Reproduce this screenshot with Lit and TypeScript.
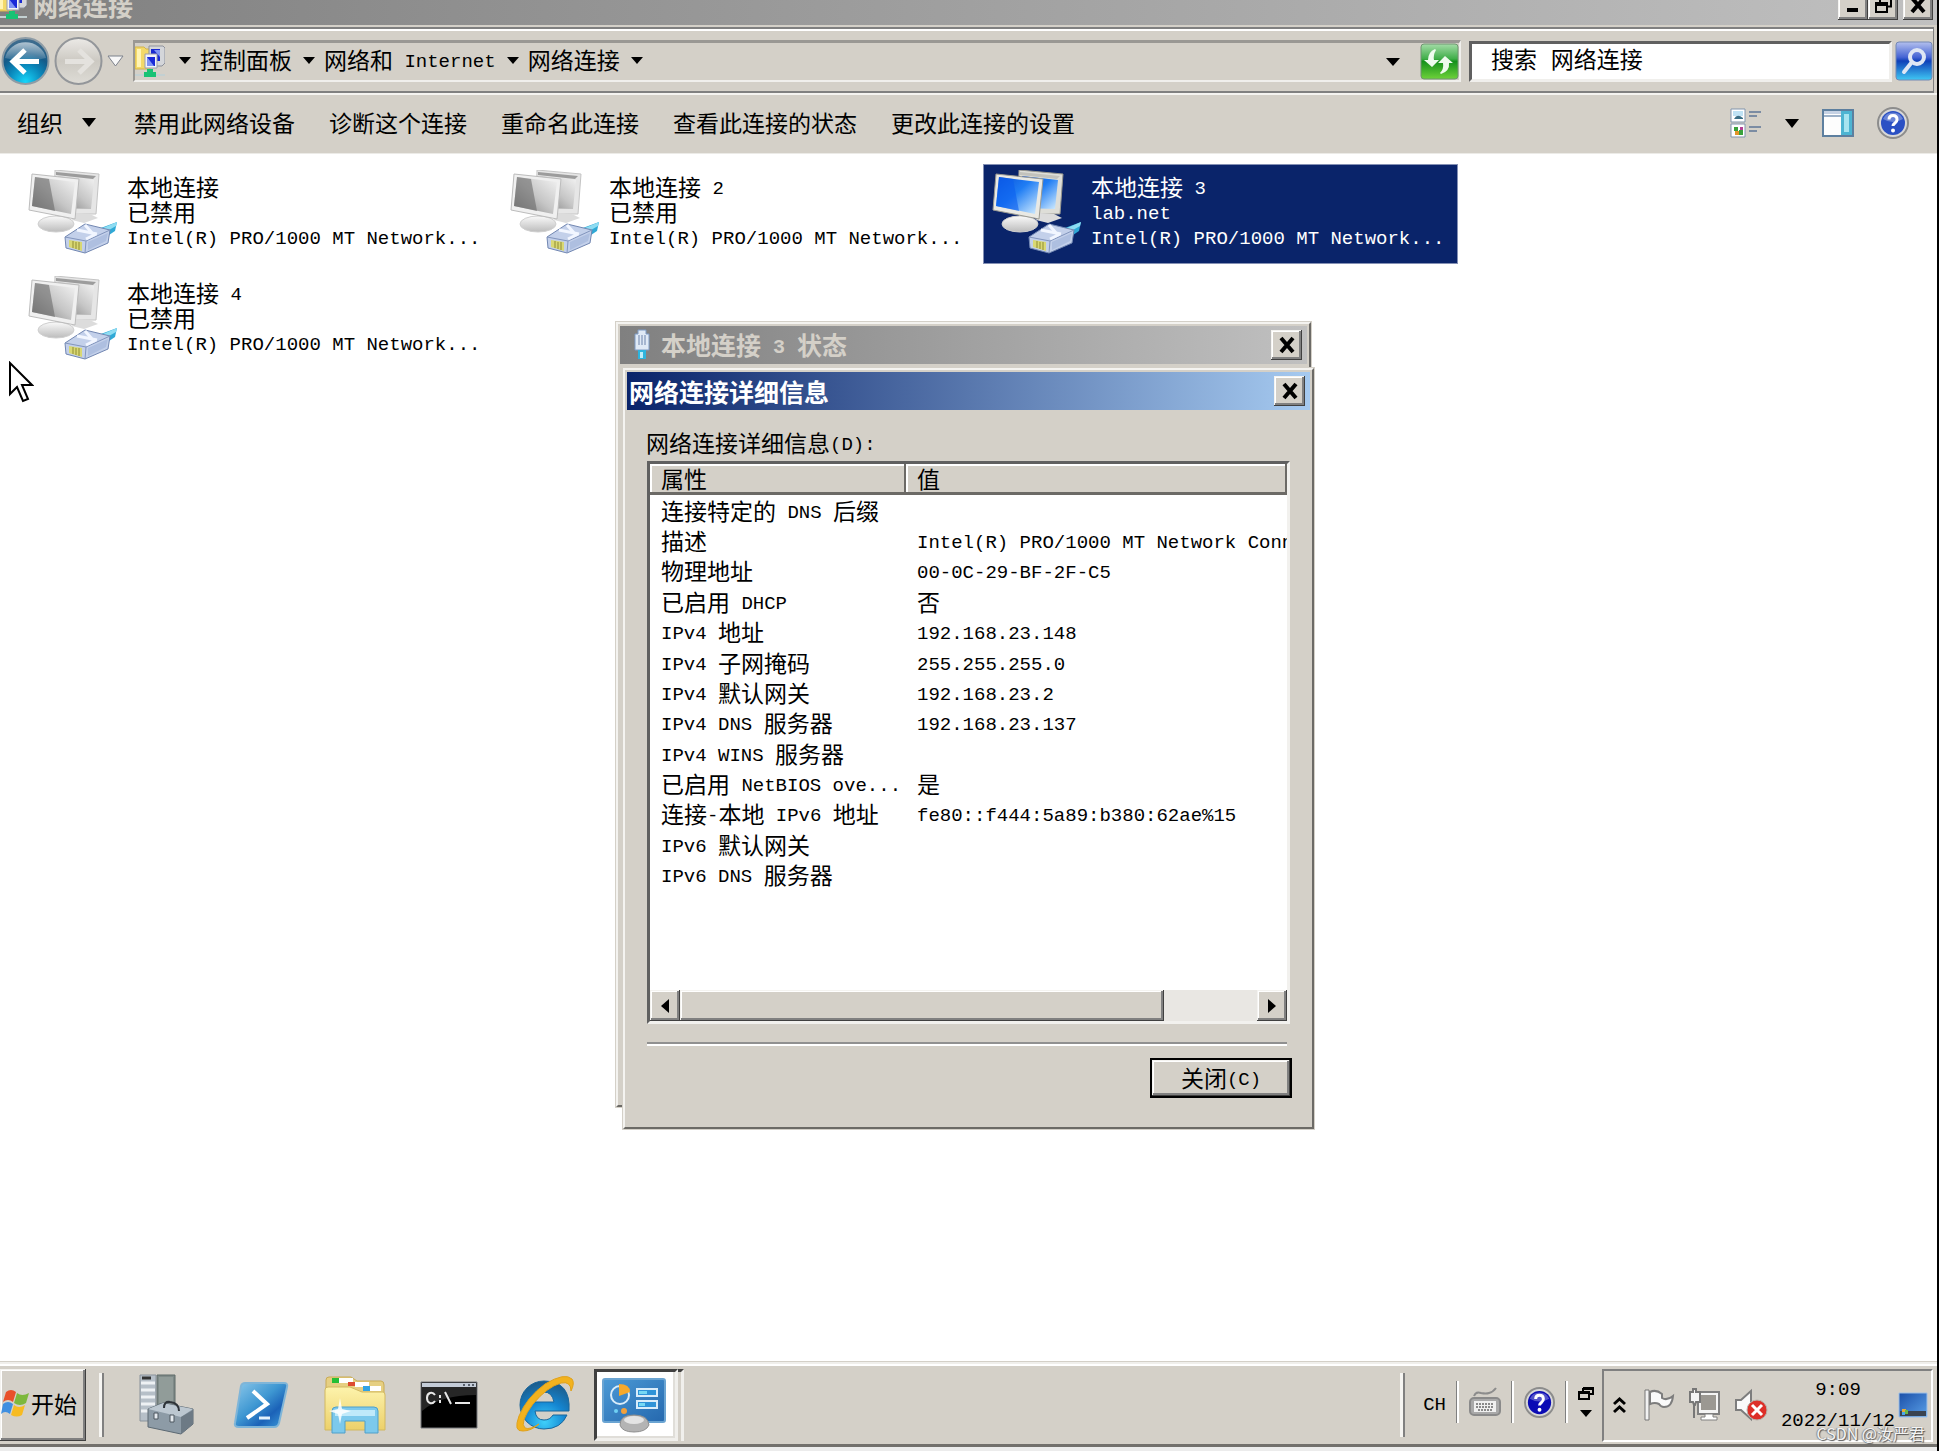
import { LitElement, html, css, svg, nothing } from "lit";
import { customElement, property } from "lit/decorators.js";
import { classMap } from "lit/directives/class-map.js";

const CJK = /([\u2e80-\uffef]+)/;

/* Latin runs are set in a half-width monospace beside the full-width Chinese glyphs. */
const mix = (text: string) =>
  text
    .split(CJK)
    .filter((run) => run !== "")
    .map((run) => (CJK.test(run) ? html`<span>${run}</span>` : html`<span class="latin">${run}</span>`));

const base = css`
  * { box-sizing: border-box; }
  :host {
    font-family: "Noto Sans CJK SC", sans-serif;
    font-size: 23px;
    line-height: 25px;
    color: #000;
  }
  button, input { font: inherit; color: inherit; margin: 0; border: 0; border-radius: 0; padding: 0; background: none; }
  svg { display: block; flex: none; }
  .latin { font-family: "Liberation Mono", monospace; font-size: 19px; line-height: 1; vertical-align: 2px; white-space: pre; }
  .raised {
    background: #d4d0c8;
    box-shadow: inset -1px -1px #404040, inset 1px 1px #f4f3f0, inset -3px -3px #808080, inset 2px 2px #fff;
  }
`;

const defs = svg`
  <defs>
    <linearGradient id="screenOn" x1="0" y1="0" x2="1" y2="1">
      <stop offset="0" stop-color="#0a4fd8"/><stop offset=".45" stop-color="#1f7df4"/><stop offset="1" stop-color="#d8f0ff"/>
    </linearGradient>
    <linearGradient id="screenOff" x1="0" y1="1" x2="1" y2="0">
      <stop offset="0" stop-color="#7c7c7c"/><stop offset=".5" stop-color="#c6c6c6"/><stop offset="1" stop-color="#f4f4f4"/>
    </linearGradient>
    <linearGradient id="stand" x1="0" y1="0" x2="0" y2="1">
      <stop offset="0" stop-color="#fafafa"/><stop offset="1" stop-color="#bcbcbc"/>
    </linearGradient>
  </defs>`;

const adapterIcon = (on: boolean) => html`<svg width="90" height="86" viewBox="0 0 90 86" aria-hidden="true">
  ${defs}
  <path d="M27 0 71 4 68 44 26 44z" fill=${on ? "#deded8" : "#e6e6e6"} stroke=${on ? "#96968e" : "#c4c4c4"}/>
  <path d="M28 2 68 6 65 9 28 5z" fill=${on ? "#c2c2bc" : "#9c9c9c"}/>
  <path d="M30 6 66 10 63 39 30 38z" fill=${on ? "url(#screenOn)" : "url(#screenOff)"}/>
  <path d="M48 43l14 1 8 4-14 5-12-3z" fill="#dcdcdc"/>
  <path d="M27 43h14v11H27z" fill="#c8c8c8"/>
  <ellipse cx="28" cy="54" rx="18" ry="8" fill="url(#stand)" stroke="#cfcfcf"/>
  <path d="M4 4 51 9 47 49 1 40z" fill=${on ? "#e9e9e4" : "#f0f0f0"} stroke=${on ? "#9a9a92" : "#bcbcbc"}/>
  <path d="M7 7 47 12 43 44 4 36z" fill=${on ? "url(#screenOn)" : "url(#screenOff)"}/>
  <path d="M7 7 21 9 27 41 4 36z" fill=${on ? "#0b5fee" : "#6a6a6a"} opacity=".6"/>
  <path d="M62 62 89 52 87 61 72 71z" fill="#2fa9d6"/>
  <path d="M70 60 89 52 88 56 74 64z" fill="#8edcf2"/>
  <path d="M37 67 57 54 82 60 80 73 57 83 38 78z" fill="#c3d0ea" stroke="#7287b2"/>
  <path d="M37 67 58 71 82 60M58 71 57 83" fill="none" stroke="#8295bd"/>
  <path d="M60 72 80 63 78 71 60 80z" fill="#aebfe0"/>
  <path d="M49 60 69 64M57 55 66 65 58 69" fill="none" stroke="#f2f6ff" stroke-width="3"/>
  <path d="M41 70 54 72V81L41 77z" fill="#d9d873"/>
  <path d="M45 71v7M48 72v7M51 72v8" stroke="#8f8c35"/>
</svg>`;

const networkIcon = html`<svg width="30" height="34" viewBox="0 0 30 34" aria-hidden="true">
  <path d="M0 2h9l2 2h4v20H0z" fill="#f3d968" stroke="#d3b44a"/>
  <path d="M2 4h4v18H2z" fill="#fff4b4"/>
  <path d="M14 1h14l2 2v15l-3 3H14z" fill="#d4d6da" stroke="#8e929c"/>
  <path d="M16 4h9v12h-9z" fill="#1a2ad0"/>
  <path d="M10 9h12v14H10z" fill="#f2f3f8" stroke="#9a9eac"/>
  <path d="M12 12h8v9h-8z" fill="#1a2ad8"/>
  <path d="M12 12l7 9h-7zM19 5l6 7V5z" fill="#7f94f4"/>
  <path d="M0 29h30v2H0z" fill="#c3d0d2"/>
  <path d="M12 24h6v3h3v5H9v-5h3z" fill="#17c274"/>
</svg>`;

const caret = (w = 12, h = 7) => html`<svg width=${w} height=${h} viewBox="0 0 12 7" preserveAspectRatio="none" aria-hidden="true"><path d="M0 0h12L6 7z" fill="#000"/></svg>`;

const closeGlyph = html`<svg width="18" height="18" viewBox="0 0 18 18" aria-hidden="true"><path d="M3 2 15 16M15 2 3 16" stroke="#000" stroke-width="4"/></svg>`;

const helpIcon = (size: number, dark: string) => html`<svg width=${size} height=${size} viewBox="0 0 32 32" aria-hidden="true">
  <circle cx="16" cy="16" r="15" fill="#d8d8d8" stroke="#8c8c8c" stroke-width="2"/>
  <circle cx="16" cy="16" r="12" fill=${dark}/>
  <path d="M6 12a11 11 0 0 1 20 0q-10 6-20 0z" fill="#fff" opacity=".3"/>
  <path d="M12 12.500q0-4 4-4t4 4q0 2-2 3.500t-2 3" fill="none" stroke="#fff" stroke-width="3"/>
  <circle cx="16" cy="23.500" r="2" fill="#fff"/>
</svg>`;

@customElement("title-bar")
class TitleBar extends LitElement {
  @property() caption = "";
  @property({ type: Boolean }) active = false;
  @property({ type: Boolean }) icon = false;

  static styles = [
    base,
    css`
      :host { display: block; }
      .bar {
        display: flex; align-items: center; gap: 10px; height: 38px; padding: 0 5px 0 2px;
        background: linear-gradient(90deg, #808080, #c0c0c0); color: #d4d0c8;
        font-size: 25px; font-weight: 700;
      }
      .bar.active { background: linear-gradient(90deg, #0a246a, #a6caf0); color: #fff; }
      .bar.icon { padding-left: 13px; }
      h2 { flex: 1; margin: 0; font: inherit; }
      .latin { font-size: 20px; }
      .close { display: grid; place-items: center; width: 31px; height: 30px; }
    `,
  ];

  render() {
    return html`<div class=${classMap({ bar: true, active: this.active, icon: this.icon })}>
      ${this.icon
        ? html`<svg width="18" height="32" viewBox="0 0 18 32" aria-hidden="true">
            <path d="M5 1h8v4h3v16H2V5h3z" fill="#dfe9f6" stroke="#7f9bc4"/>
            <path d="M6 6v10M9 6v10M12 6v10" stroke="#6c83ab"/>
            <path d="M5 21h8v9H5z" fill="#2db4dd"/><path d="M7 23h3v6H7z" fill="#bdeefa"/>
          </svg>`
        : nothing}
      <h2>${mix(this.caption)}</h2>
      <button class="close raised" aria-label="关闭">${closeGlyph}</button>
    </div>`;
  }
}

@customElement("details-dialog")
class DetailsDialog extends LitElement {
  static styles = [
    base,
    css`
      :host { display: block; }
      .label { margin: 17px 20px 4px 19px; line-height: 30px; }
      .list { margin: 0 20px; border: 3px solid; border-color: #606060 #f2f1ee #f2f1ee #606060; background: #fff; }
      .rows { height: 526px; overflow: hidden; }
      table { width: 100%; height: 426px; table-layout: fixed; border-collapse: separate; border-spacing: 0; line-height: 28px; }
      .prop { width: 256px; }
      thead tr { height: 31px; }
      th {
        height: 31px; padding: 0 0 0 11px; font-weight: 400; text-align: left; vertical-align: top; background: #d4d0c8;
        box-shadow: inset -2px -3px #6c6a66, inset 2px 2px #fff;
      }
      td { padding: 0 0 1px 11px; white-space: nowrap; }
      .scroll { display: flex; height: 31px; background: #e9e7e3; }
      .scroll button { display: grid; place-items: center; width: 30px; }
      .thumb { flex: 0 1 76%; margin-right: auto; }
      hr { margin: 18px 23px 12px 20px; height: 4px; border: 0; border-top: 2px solid #909090; border-bottom: 2px solid #fff; }
      footer { display: flex; justify-content: flex-end; padding: 0 18px 27px; }
      .ok { width: 142px; height: 40px; border: 2px solid #000; padding-bottom: 2px; }
    `,
  ];

  private rows: [string, string][] = [
    ["连接特定的 DNS 后缀", ""],
    ["描述", "Intel(R) PRO/1000 MT Network Connection"],
    ["物理地址", "00-0C-29-BF-2F-C5"],
    ["已启用 DHCP", "否"],
    ["IPv4 地址", "192.168.23.148"],
    ["IPv4 子网掩码", "255.255.255.0"],
    ["IPv4 默认网关", "192.168.23.2"],
    ["IPv4 DNS 服务器", "192.168.23.137"],
    ["IPv4 WINS 服务器", ""],
    ["已启用 NetBIOS ove...", "是"],
    ["连接-本地 IPv6 地址", "fe80::f444:5a89:b380:62ae%15"],
    ["IPv6 默认网关", ""],
    ["IPv6 DNS 服务器", ""],
  ];

  render() {
    return html`
      <title-bar caption="网络连接详细信息" active></title-bar>
      <div class="label" id="details-label">${mix("网络连接详细信息(D):")}</div>
      <div class="list">
        <div class="rows">
          <table aria-labelledby="details-label">
            <thead><tr><th class="prop" scope="col">属性</th><th scope="col">值</th></tr></thead>
            <tbody>${this.rows.map(([name, value]) => html`<tr><td>${mix(name)}</td><td>${mix(value)}</td></tr>`)}</tbody>
          </table>
        </div>
        <div class="scroll">
          <button class="raised" aria-label="向左"><svg width="8" height="14" viewBox="0 0 8 14"><path d="M8 0v14L0 7z"/></svg></button>
          <div class="thumb raised"></div>
          <button class="raised" aria-label="向右"><svg width="8" height="14" viewBox="0 0 8 14"><path d="M0 0v14L8 7z"/></svg></button>
        </div>
      </div>
      <hr />
      <footer><button class="ok raised">${mix("关闭(C)")}</button></footer>
    `;
  }
}

@customElement("explorer-chrome")
class ExplorerChrome extends LitElement {
  static styles = [
    base,
    css`
      :host { display: block; background: #d4d0c8; }
      .title {
        display: flex; align-items: flex-start; justify-content: space-between; height: 25px; overflow: hidden;
        padding-right: 4px; background: linear-gradient(90deg, #808080, #c0c0c0);
      }
      .name { display: flex; gap: 6px; margin-top: -13px; color: #d4d0c8; font-size: 25px; font-weight: 700; line-height: 36px; }
      .name svg { margin-left: -3px; }
      .controls { display: flex; }
      .controls button { display: grid; place-items: center; width: 30px; height: 30px; margin-top: -10px; }
      .controls .x { margin-left: 5px; }
      .nav {
        display: flex; align-items: center; height: 66px; margin-top: 2px; padding: 2px 0 0 1px;
        border: 2px solid #808080; border-left: 0; border-right-width: 1px; box-shadow: inset 0 2px #fff; margin-right: 3px;
      }
      .arrows { display: flex; align-items: center; gap: 4px; }
      .arrows svg { display: block; }
      .recent { margin: 0 9px 0 0; }
      .address {
        display: flex; flex: 1; align-items: center; height: 42px; margin-right: 8px;
        border: 2px solid; border-color: #9a9894 #f0efec #f0efec #9a9894; border-top-width: 3px;
      }
      .crumbs { display: flex; flex: 1; align-items: center; gap: 9px; padding: 0 0 2px 14px; }
      .crumbs button { padding: 0 2px 3px 0; white-space: nowrap; }
      .history { margin-right: 20px; }
      .search { display: flex; align-items: center; gap: 3px; width: 464px; }
      .search input {
        flex: 1; min-width: 0; height: 41px; padding: 2px 0 0 19px; background: #fff; outline: 0;
        font-family: "Liberation Mono", "Noto Sans CJK SC", monospace;
        border: 3px solid; border-color: #606060 #f0efec #f0efec #606060;
      }
      .search input::placeholder { color: #000; opacity: 1; }
      .tools {
        display: flex; align-items: center; justify-content: space-between; height: 60px; padding: 0 28px 2px 17px;
        border-top: 2px solid #f4f3f0;
      }
      .group { display: flex; align-items: center; gap: 34px; padding-bottom: 2px; }
      .group button { display: flex; align-items: center; gap: 19px; line-height: 30px; white-space: nowrap; }
      .group .organize { padding-right: 4px; }
      .views { display: flex; align-items: center; gap: 23px; }
    `,
  ];

  render() {
    return html`
      <header class="title">
        <div class="name">${networkIcon}<span>网络连接</span></div>
        <div class="controls">
          <button class="raised" aria-label="最小化"><svg width="18" height="18" viewBox="0 0 18 18"><path d="M3 12h11v4H3z"/></svg></button>
          <button class="raised" aria-label="还原"><svg width="20" height="18" viewBox="0 0 20 18"><path d="M7 1.500h11v9h-4M7 2v4M7 3h11M3 7h11v9H3zM3 9h11" fill="none" stroke="#000" stroke-width="2"/></svg></button>
          <button class="raised x" aria-label="关闭">${closeGlyph}</button>
        </div>
      </header>
      <div class="nav">
        <div class="arrows">
          <button aria-label="后退">
            <svg width="49" height="50" viewBox="0 0 49 50">
              <defs>
                <radialGradient id="back" cx=".5" cy=".95" r=".95"><stop offset="0" stop-color="#16d6fa"/><stop offset=".4" stop-color="#0a84b8"/><stop offset=".65" stop-color="#155a88"/><stop offset="1" stop-color="#47708f"/></radialGradient>
                <linearGradient id="shine" x1="0" y1="0" x2="0" y2="1"><stop offset="0" stop-color="#fff" stop-opacity=".6"/><stop offset="1" stop-color="#fff" stop-opacity=".1"/></linearGradient>
              </defs>
              <circle cx="24.500" cy="25" r="23" fill="url(#back)" stroke="#8e9ca6" stroke-width="2"/>
              <path d="M4 22a21 20 0 0 1 41 0q-20 6-41 0z" fill="url(#shine)"/>
              <path d="M24 14 12 25.500 24 37M13 25.500H38" fill="none" stroke="#fff" stroke-width="5"/>
            </svg>
          </button>
          <button aria-label="前进">
            <svg width="49" height="50" viewBox="0 0 49 50">
              <defs><linearGradient id="fwd" x1="0" y1="0" x2="0" y2="1"><stop offset="0" stop-color="#eceae7"/><stop offset=".5" stop-color="#ccc9c2"/><stop offset="1" stop-color="#dedcd6"/></linearGradient></defs>
              <circle cx="24.500" cy="25" r="23" fill="url(#fwd)" stroke="#93969a" stroke-width="2"/>
              <path d="M25 14 37 25.500 25 37M36 25.500H11" fill="none" stroke="#e4e2de" stroke-width="5"/>
            </svg>
          </button>
          <button class="recent" aria-label="最近的页面"><svg width="17" height="12" viewBox="0 0 17 12"><path d="M1 1h15L8.500 11z" fill="#f8f8f8" stroke="#7d828c"/></svg></button>
        </div>
        <div class="address">
          ${networkIcon}
          <nav class="crumbs">
            ${caret()}<button>控制面板</button>${caret()}<button>${mix("网络和 Internet")}</button>${caret()}<button>网络连接</button>${caret()}
          </nav>
          <button class="history" aria-label="历史">${caret(14, 8)}</button>
          <button aria-label="刷新">
            <svg width="39" height="37" viewBox="0 0 39 37">
              <defs><linearGradient id="go" x1="0" y1="0" x2="0" y2="1"><stop offset="0" stop-color="#a4dca8"/><stop offset=".42" stop-color="#3fae48"/><stop offset=".5" stop-color="#15911c"/><stop offset="1" stop-color="#6ed23a"/></linearGradient></defs>
              <rect x="1" y="1" width="37" height="35" rx="3" fill="url(#go)" stroke="#6f9470"/>
              <path d="M15 6q-7 3-7 11H4l8 7 7-7h-5q-1-5 2-10z" fill="#eefbee"/>
              <path d="M21 31q9-3 8-11h4l-8-7-7 7h5q1 6-3 10z" fill="#eefbee"/>
            </svg>
          </button>
        </div>
        <form class="search" @submit=${(e: Event) => e.preventDefault()}>
          <input type="text" aria-label="搜索" placeholder="搜索 网络连接" />
          <button aria-label="开始搜索">
            <svg width="38" height="40" viewBox="0 0 38 40">
              <defs><linearGradient id="find" x1="0" y1="0" x2="0" y2="1"><stop offset="0" stop-color="#b4c0ee"/><stop offset=".4" stop-color="#4564d4"/><stop offset=".5" stop-color="#0f40b8"/><stop offset="1" stop-color="#3fc8f4"/></linearGradient></defs>
              <rect x="1" y="1" width="36" height="38" rx="3" fill="url(#find)" stroke="#7388b4"/>
              <circle cx="22" cy="16" r="7" fill="none" stroke="#dfe6f4" stroke-width="4"/>
              <path d="M17 21 9 31" stroke="#dfe6f4" stroke-width="4" stroke-linecap="round"/>
            </svg>
          </button>
        </form>
      </div>
      <div class="tools">
        <div class="group">
          <button class="organize">组织 ${caret(14, 9)}</button>
          ${["禁用此网络设备", "诊断这个连接", "重命名此连接", "查看此连接的状态", "更改此连接的设置"].map((t) => html`<button>${t}</button>`)}
        </div>
        <div class="views">
          <button aria-label="更改视图">
            <svg width="32" height="32" viewBox="0 0 32 32">
              <path d="M1 2h14v13H1zM1 17h14v13H1z" fill="#fff" stroke="#8195ad"/>
              <path d="M3 4h10v5H3z" fill="#bfe2f4"/><path d="M4 12q3-6 9-1v1z" fill="#3b6f86"/>
              <path d="M4 20h4v4H4zM9 23h4v5H9z" fill="#3aa23c"/><path d="M5 24h4v4H5z" fill="#e2952a"/><path d="M10 20h3v3h-3z" fill="#b33f95"/>
              <path d="M19 5h12M19 9h8M19 20h12M19 24h8" stroke="#7b8ca3" stroke-width="2"/>
            </svg>
          </button>
          <button aria-label="视图选项">${caret(14, 9)}</button>
          <button aria-label="预览窗格">
            <svg width="32" height="28" viewBox="0 0 32 28">
              <path d="M1 1h30v26H1z" fill="#fdfdfd" stroke="#5d7f9f" stroke-width="2"/>
              <path d="M2 2h17v3H2z" fill="#c6d2e4"/><path d="M2 6h17v2H2z" fill="#9db1c8"/>
              <path d="M19 2h11v24H19z" fill="#4db4d2"/><path d="M22 5h5v18h-5z" fill="#a7e4f0"/>
            </svg>
          </button>
          <button aria-label="帮助">${helpIcon(32, "#2a50c4")}</button>
        </div>
      </div>
    `;
  }
}

@customElement("task-bar")
class TaskBar extends LitElement {
  static styles = [
    base,
    css`
      :host { display: block; }
      .bar {
        display: flex; align-items: center; height: 86px; padding: 4px 4px 0 0; background: #d4d0c8;
        border-top: 1px solid #d4d0c8; border-bottom: 3px solid #72706c; box-shadow: inset 0 2px #f0efec, inset 0 4px #fff;
      }
      .start { display: flex; align-items: center; gap: 1px; height: 72px; width: 86px; padding: 0 0 4px 1px; white-space: nowrap; }
      .grip { width: 5px; height: 64px; background: #f6f5f2; border-right: 2px solid #808080; }
      .start + .grip { margin: 0 16px 0 13px; }
      .apps { display: flex; flex: 1; }
      .apps button { display: grid; place-items: center; width: 94px; height: 72px; }
      .apps .open {
        width: 84px; margin-left: 4px; background: #fff; padding-right: 4px;
        border: 3px solid; border-color: #404040 #f0efec #f0efec #404040; box-shadow: inset -2px -2px #e0ded9;
      }
      .edge { width: 6px; height: 72px; border-right: 3px solid #f0efec; border-top: 3px solid #404040; }
      .lang { display: flex; align-items: center; padding: 0 8px 6px 18px; gap: 10px; }
      .sep { width: 3px; height: 42px; background: #fff; border-left: 1px solid #808080; }
      .mini { display: grid; justify-items: center; gap: 10px; }
      .tray {
        display: flex; align-items: center; gap: 13px; height: 73px; padding: 0 3px 0 9px;
        border: 2px solid; border-color: #808080 #fff #fff #808080;
      }
      .more { padding-right: 4px; }
      .clock { display: grid; gap: 6px; text-align: center; margin-right: -10px; padding-bottom: 4px; }
      .foot { height: 4px; background: #ececec; }
    `,
  ];

  render() {
    return html`
      <footer class="bar">
        <button class="start raised">
          <svg width="29" height="28" viewBox="0 0 29 28" aria-hidden="true">
            <path d="M5 3q5-4 10 0l-3 10q-5-4-10 0z" fill="#e8502a"/>
            <path d="M16 4q5 4 12 0l-3 10q-6 4-12 0z" fill="#7db83c"/>
            <path d="M2 15q5-4 10 0L9 25q-5-4-9 0z" fill="#3f8fe0"/>
            <path d="M13 16q5 4 11 0l-3 10q-5 3-11 0z" fill="#f7bb22"/>
          </svg>
          <span>开始</span>
        </button>
        <div class="grip"></div>
        <div class="apps">
          <button aria-label="服务器管理器">
            <svg width="56" height="62" viewBox="0 0 56 62">
              <path d="M18 1h18v46H18z" fill="#7f8a88" stroke="#5f6a68"/><path d="M20 3h14v26H20z" fill="#919c99"/>
              <path d="M1 1h16v46H1z" fill="#b6bfc8" stroke="#8a939b"/><path d="M3 4h9" stroke="#333" stroke-width="3"/>
              <path d="M2 9h14M2 16h14M2 23h14M2 30h14M2 37h14" stroke="#eef1f4" stroke-width="3"/>
              <path d="M9 35 24 29 54 35v15L42 60 9 53z" fill="#8d9ba6" stroke="#5c6973"/>
              <path d="M9 35 24 29 54 35 42 43z" fill="#bcc7d0"/><path d="M42 43 54 36v14L42 60z" fill="#6d7a85"/>
              <path d="M25 34q0-7 6-6 9 1 9 9" fill="none" stroke="#2e3338" stroke-width="2"/>
              <path d="M15 39h4v6h-4zM31 41h4v7h-4z" fill="#e4e9ee" stroke="#4d565e"/>
            </svg>
          </button>
          <button aria-label="PowerShell">
            <svg width="56" height="48" viewBox="0 0 56 48">
              <defs><linearGradient id="ps" x1="0" y1="0" x2="1" y2="1"><stop offset="0" stop-color="#8cc8ea"/><stop offset=".45" stop-color="#3e97d2"/><stop offset=".7" stop-color="#1b62b8"/><stop offset="1" stop-color="#3f9fdc"/></linearGradient></defs>
              <path d="M12 2h39q4 0 3 4l-8 36q-1 4-5 4H6q-5 0-4-4L8 5q1-3 4-3z" fill="url(#ps)" stroke="#7fb5d8" stroke-width="2"/>
              <path d="M20 10 34 23 14 37" fill="none" stroke="#fff" stroke-width="4"/><path d="M26 37h11" stroke="#e4f2fc" stroke-width="3"/>
            </svg>
          </button>
          <button aria-label="资源管理器">
            <svg width="64" height="58" viewBox="0 0 64 58">
              <defs><linearGradient id="fold" x1="0" y1="0" x2="0" y2="1"><stop offset="0" stop-color="#fdf3ac"/><stop offset="1" stop-color="#ecd06a"/></linearGradient></defs>
              <path d="M3 4q0-3 3-3h22l6 4h24q3 0 3 4v42H3z" fill="#e6cf82" stroke="#c9ab55"/>
              <path d="M16 2h14v5H16zM32 6h14v5H32zM46 10h12v5H46z" fill="#fff"/>
              <path d="M9 2h7v5H9z" fill="#25bf35"/><path d="M25 6h7v4h-7z" fill="#dd4b30"/>
              <path d="M2 14q0-3 3-3h22l12 5h21q2 0 2 3v35H2z" fill="url(#fold)" stroke="#d2b860"/>
              <path d="M40 10h7v5h-7z" fill="#30a2e4"/>
              <path d="M9 57V35q0-4 4-4h38q4 0 4 4v22H42V45H22v12z" fill="#7cc9ec" stroke="#4f9fca"/>
              <path d="M12 34h40v6H12z" fill="#bfe9fa"/>
              <path d="M17 22 19 33 28 35 19 38 17 48 15 38 6 35 15 33z" fill="#fff" opacity=".85"/>
            </svg>
          </button>
          <button aria-label="命令提示符">
            <svg width="58" height="48" viewBox="0 0 58 48">
              <path d="M1 1h56v46H1z" fill="#000" stroke="#77797c"/><path d="M2 2h54v4H2z" fill="#c4ccd8"/>
              <path d="M44 3v2M49 3v2M53 3v2" stroke="#59606b" stroke-width="2"/>
              <path d="M2 6h54v8Q20 14 2 30z" fill="#fff" opacity=".15"/>
              <path d="M15 14q-2-3-5-2-3 1-3 5t3 5q3 1 5-2M20 14v3M20 19v3M25 11l6 12M35 22h15" fill="none" stroke="#e8e8e8" stroke-width="2"/>
            </svg>
          </button>
          <button aria-label="Internet Explorer">
            <svg width="64" height="60" viewBox="0 0 64 60">
              <defs><radialGradient id="ie" cx=".5" cy=".85" r=".85"><stop offset="0" stop-color="#3fd0fa"/><stop offset=".5" stop-color="#1486d2"/><stop offset="1" stop-color="#1c5a88"/></radialGradient></defs>
              <path fill-rule="evenodd" d="M33 6A24 24 0 0 0 33 54Q50 54 56 40H42Q39 45 33 45 25 45 24 36H58Q60 6 33 6zM24 27Q25 17 33 17T43 27z" fill="url(#ie)" stroke="#19669c"/>
              <path d="M12 56Q2 57 8 41 16 22 34 9 54-3 61 4 64 8 60 16 60 6 50 8 36 12 22 29 8 48 14 53q5 2 14-4-8 7-16 7z" fill="#f2b21e" stroke="#e0a11a"/>
            </svg>
          </button>
          <button class="open" aria-label="控制面板">
            <svg width="64" height="56" viewBox="0 0 64 56">
              <defs><linearGradient id="cp" x1="0" y1="0" x2="1" y2="1"><stop offset="0" stop-color="#4c9ad6"/><stop offset="1" stop-color="#2568ae"/></linearGradient></defs>
              <rect x="1" y="2" width="62" height="43" rx="2" fill="url(#cp)" stroke="#6aa4d2" stroke-width="2"/>
              <circle cx="18" cy="18" r="9" fill="none" stroke="#d9ecfa" stroke-width="2"/>
              <path d="M17 19V7q11 0 11 8z" fill="#f6a92c"/>
              <path d="M35 12h20v7H35zM35 24h20v7H35z" fill="#2f93d8" stroke="#d9ecfa" stroke-width="2"/><path d="M37 14h8v3h-8zM37 26h6v3h-6z" fill="#76d8f4"/>
              <circle cx="14" cy="34" r="2" fill="#6fd0f4"/><circle cx="22" cy="34" r="3" fill="#f0a03c"/>
              <path d="M18 48Q18 38 32 38T47 48Q44 55 32 55T18 48z" fill="#b4b4b4" stroke="#8f8f8f"/><ellipse cx="32" cy="43" rx="10" ry="4" fill="#e4e4e4"/>
            </svg>
          </button>
          <div class="edge"></div>
        </div>
        <div class="grip"></div>
        <div class="lang">
          <button>${mix("CH")}</button>
          <div class="sep"></div>
          <button aria-label="键盘"><svg width="32" height="30" viewBox="0 0 32 30">
            <path d="M5 9q2-5 7-3 5 1 8 0 4-1 7-5" fill="none" stroke="#8c8c8c" stroke-width="2"/>
            <rect x="1" y="11" width="30" height="17" rx="4" fill="#a9a9a9" stroke="#8a8a8a" stroke-width="2"/>
            <path d="M5 14h22v11H5z" fill="#f0f0f0"/><path d="M7 17h18M7 20h18M9 23h14" stroke="#8a8a8a" stroke-width="2" stroke-dasharray="2 1"/>
          </svg></button>
          <div class="sep"></div>
          <button aria-label="帮助">${helpIcon(31, "#0a0ab4")}</button>
          <div class="sep"></div>
          <div class="mini">
            <svg width="16" height="13" viewBox="0 0 16 13"><path d="M5 1h10v6h-3M5 1v3M1 5h10v7H1zM5 2h10M1 6h10" fill="none" stroke="#000" stroke-width="2"/></svg>
            ${caret()}
          </div>
        </div>
        <div class="tray">
          <button class="more" aria-label="显示隐藏的图标"><svg width="13" height="18" viewBox="0 0 13 18"><path d="M1 8 6.500 3 12 8M1 16 6.500 11 12 16" fill="none" stroke="#000" stroke-width="3"/></svg></button>
          <svg width="32" height="34" viewBox="0 0 32 34"><path d="M2 2h4v30H2z" fill="#f2f2f2" stroke="#777"/><path d="M7 4q6-3 12 2v4q5 3 11-2-1 11-9 11-3 0-5-3-4-2-9 0z" fill="#fafafa" stroke="#7d7d7d" stroke-width="2"/></svg>
          <svg width="33" height="34" viewBox="0 0 33 34"><path d="M10 4h21v22H10z" fill="#f4f4f4" stroke="#808080" stroke-width="2"/><path d="M13 7h15v15H13z" fill="#9b9892"/><path d="M17 26h8v3h4v3H13v-3h4z" fill="#fff" stroke="#808080"/><path d="M3 4h2V1h3v3h4v10H8l-1 3H6L5 14H2V4zM6 16v14" fill="#f4f4f4" stroke="#777" stroke-width="2"/></svg>
          <svg width="34" height="34" viewBox="0 0 34 34"><path d="M2 12h5l10-9v28L7 22H2z" fill="#fafafa" stroke="#7d7d7d" stroke-width="2"/><circle cx="23" cy="22" r="10" fill="#dd2f28" stroke="#b8b0a8"/><path d="M18 17l10 10M28 17 18 27" stroke="#fff" stroke-width="3"/></svg>
          <div class="clock"><time>${mix("9:09")}</time><time>${mix("2022/11/12")}</time></div>
          <button aria-label="显示桌面"><svg width="30" height="26" viewBox="0 0 30 26">
            <defs><linearGradient id="desk" x1="0" y1="0" x2="1" y2="1"><stop offset="0" stop-color="#1b4fa8"/><stop offset="1" stop-color="#5aa0e8"/></linearGradient></defs>
            <path d="M1 1h28v24H1z" fill="url(#desk)" stroke="#9fc0e6"/><path d="M2 19h26v5H2z" fill="#3a4350"/><path d="M4 17h4v4H4z" fill="#e8ab35"/><path d="M4 20h3v3H4z" fill="#4aa8ea"/><path d="M7 18h3v4H7z" fill="#6ab648"/>
          </svg></button>
        </div>
      </footer>
      <div class="foot"></div>
    `;
  }
}

@customElement("app-root")
class AppRoot extends LitElement {
  static styles = [
    base,
    css`
      :host { display: flex; flex-direction: column; min-height: 100vh; position: relative; background: #fff; overflow: hidden; }
      .desktop { display: flex; flex: 1; flex-direction: column; border-right: 2px solid #000; }
      .items {
        display: grid; flex: 1; align-content: start; grid-template-columns: repeat(3, 475px); gap: 6px 7px;
        margin: 0; padding: 10px 19px; list-style: none; border-top: 1px solid #ecebe7;
      }
      .item { display: flex; gap: 9px; width: 100%; height: 100px; padding: 5px 8px; border: 1px solid transparent; text-align: left; }
      .item .text { display: grid; align-content: start; padding-top: 4px; }
      .item.selected { background: #0a246a; color: #fff; border-color: #8490b4; }
      .window {
        position: absolute; padding: 2px; background: #d4d0c8;
        border: 3px solid; border-color: #f4f3f0 #6c6a66 #6c6a66 #f4f3f0; outline: 1px solid #d4d0c8; outline-offset: -1px;
      }
      .status { left: 615px; top: 321px; width: 697px; height: 787px; }
      .details { left: 622px; top: 367px; width: 693px; }
      .cursor { position: absolute; left: 8px; top: 361px; }
      .mark {
        position: absolute; right: 14px; bottom: 6px; font-size: 16px; line-height: 24px; color: #f4f4f4;
        text-shadow: 1px 1px 1px #555, -1px 0 1px #888;
      }
    `,
  ];

  private items = [
    { name: "本地连接", state: "已禁用" },
    { name: "本地连接 2", state: "已禁用" },
    { name: "本地连接 3", state: "lab.net", on: true },
    { name: "本地连接 4", state: "已禁用" },
  ];

  render() {
    return html`
      <div class="desktop">
        <explorer-chrome></explorer-chrome>
        <ul class="items">
          ${this.items.map(
            (i) => html`<li>
              <button class=${classMap({ item: true, selected: !!i.on })}>
                ${adapterIcon(!!i.on)}
                <span class="text"><span>${mix(i.name)}</span><span>${mix(i.state)}</span><span>${mix("Intel(R) PRO/1000 MT Network...")}</span></span>
              </button>
            </li>`,
          )}
        </ul>
        <task-bar></task-bar>
      </div>
      <section class="window status"><title-bar caption="本地连接 3 状态" icon></title-bar></section>
      <section class="window details"><details-dialog></details-dialog></section>
      <svg class="cursor" width="26" height="43" viewBox="0 0 26 43" aria-hidden="true"><path d="M2 2v31l7-7 6 14 5-2-6-14h10z" fill="#fff" stroke="#000" stroke-width="2"/></svg>
      <div class="mark">CSDN @汝严君</div>
    `;
  }
}
